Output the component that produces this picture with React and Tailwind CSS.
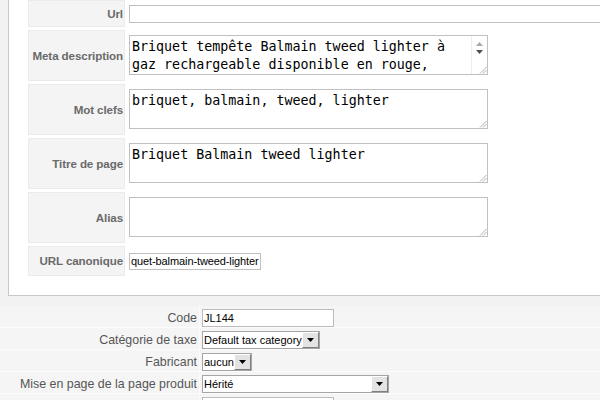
import React from "react";

const Grip = () => (
  <svg width="8" height="8" viewBox="0 0 8 8" className="absolute right-0 bottom-0">
    <line x1="7.5" y1="1" x2="1" y2="7.5" stroke="#b0b0b0" strokeWidth="1" />
    <line x1="7.5" y1="4" x2="4" y2="7.5" stroke="#b0b0b0" strokeWidth="1" />
  </svg>
);

const Label = ({ children, h }) => (
  <div
    className={`w-[97px] shrink-0 ${h} bg-[#f4f4f4] border border-[#ebebeb] flex items-center justify-end pr-[1px] text-[11.6px] tracking-[-0.1px] font-bold text-[#6a6a6a] whitespace-nowrap`}
  >
    {children}
  </div>
);

const Area = ({ lines, scroll }) => (
  <div className="relative ml-[4px] mt-[5px] self-start w-[359px] h-[40px] border border-[#c0c0c0] bg-white overflow-hidden">
    <div className="pl-[2px] pt-[2px] font-['DejaVu_Sans_Mono',monospace] text-[13.33px] leading-[18px] text-black whitespace-pre">
      {lines.map((l, i) => (
        <div key={i}>{l}</div>
      ))}
    </div>
    {scroll && (
      <div className="absolute right-0 top-0 bottom-0 w-[16px] bg-white border-l border-[#ececec] flex flex-col items-center pt-[6px] gap-[4px]">
        <svg width="7" height="4" viewBox="0 0 7 4">
          <path d="M0 4 L3.5 0 L7 4 Z" fill="#a8a8a8" />
        </svg>
        <svg width="7" height="4" viewBox="0 0 7 4">
          <path d="M0 0 L7 0 L3.5 4 Z" fill="#505050" />
        </svg>
      </div>
    )}
    <Grip />
  </div>
);

const Select = ({ w, children }) => (
  <div className={`${w} h-[18px] border border-[#a5a5a5] bg-white flex items-stretch`}>
    <div className="flex-1 pl-[1px] text-[11px] leading-[16px] text-black whitespace-nowrap overflow-hidden">
      {children}
    </div>
    <div className="w-[17px] shrink-0 bg-[#e3e3e3] border-t border-l border-t-white border-l-white border-r border-b border-r-[#808080] border-b-[#808080] flex items-center justify-center">
      <svg width="7" height="4" viewBox="0 0 7 4">
        <path d="M0 0 L7 0 L3.5 4 Z" fill="#000" />
      </svg>
    </div>
  </div>
);

const Row = ({ label, children }) => (
  <div className="flex h-[22px] bg-[#f5f5f5] border-b border-[#fcfcfc]">
    <div className="w-[200px] shrink-0 border-r border-[#fbfbfb] pr-[2px] pt-[3px] text-right text-[12.4px] leading-[18px] text-[#555] whitespace-nowrap">
      {label}
    </div>
    <div className="pl-[2px] pt-[3px]">{children}</div>
  </div>
);

const Box = ({ w, children }) => (
  <div className={`${w} h-[18px] border border-[#bcbcbc] bg-white pl-[1px] text-[11px] leading-[16px] text-black whitespace-nowrap overflow-hidden`}>
    {children}
  </div>
);

export default function App() {
  return (
    <div className="w-[600px] h-[400px] overflow-hidden bg-[#f2f2f2] font-['Liberation_Sans',Arial,sans-serif]">
      <div className="pl-[8px]">
        <div className="h-[296px] bg-white border-l border-b border-[#c8c8c8] pl-[19px] flex flex-col gap-[3px]">
          <div className="flex items-center h-[27px]">
            <Label h="h-[27px]">Url</Label>
            <div className="ml-[4px] w-[480px] h-[18px] shrink-0 border border-[#c0c0c0] bg-white" />
          </div>
          <div className="flex h-[51px]">
            <Label h="h-[51px]">Meta description</Label>
            <Area
              scroll
              lines={[
                "Briquet tempête Balmain tweed lighter à",
                "gaz rechargeable disponible en rouge,",
              ]}
            />
          </div>
          <div className="flex h-[51px]">
            <Label h="h-[51px]">Mot clefs</Label>
            <Area lines={["briquet, balmain, tweed, lighter"]} />
          </div>
          <div className="flex h-[51px]">
            <Label h="h-[51px]">Titre de page</Label>
            <Area lines={["Briquet Balmain tweed lighter"]} />
          </div>
          <div className="flex h-[51px]">
            <Label h="h-[51px]">Alias</Label>
            <Area lines={[""]} />
          </div>
          <div className="flex items-center h-[30px]">
            <Label h="h-[30px]">URL canonique</Label>
            <div className="ml-[4px] w-[132px] h-[17px] border border-[#c0c0c0] bg-white pl-[1px] text-[11px] tracking-[-0.1px] leading-[15px] text-black whitespace-nowrap overflow-hidden">
              quet-balmain-tweed-lighter
            </div>
          </div>
        </div>
      </div>

      <div className="mt-[10px]">
        <Row label="Code">
          <Box w="w-[132px]">JL144</Box>
        </Row>
        <Row label="Catégorie de taxe">
          <Select w="w-[118px]">Default tax category</Select>
        </Row>
        <Row label="Fabricant">
          <Select w="w-[50px]">aucun</Select>
        </Row>
        <Row label="Mise en page de la page produit">
          <Select w="w-[187px]">Hérité</Select>
        </Row>
        <Row label="">
          <Box w="w-[132px]"></Box>
        </Row>
      </div>
    </div>
  );
}
